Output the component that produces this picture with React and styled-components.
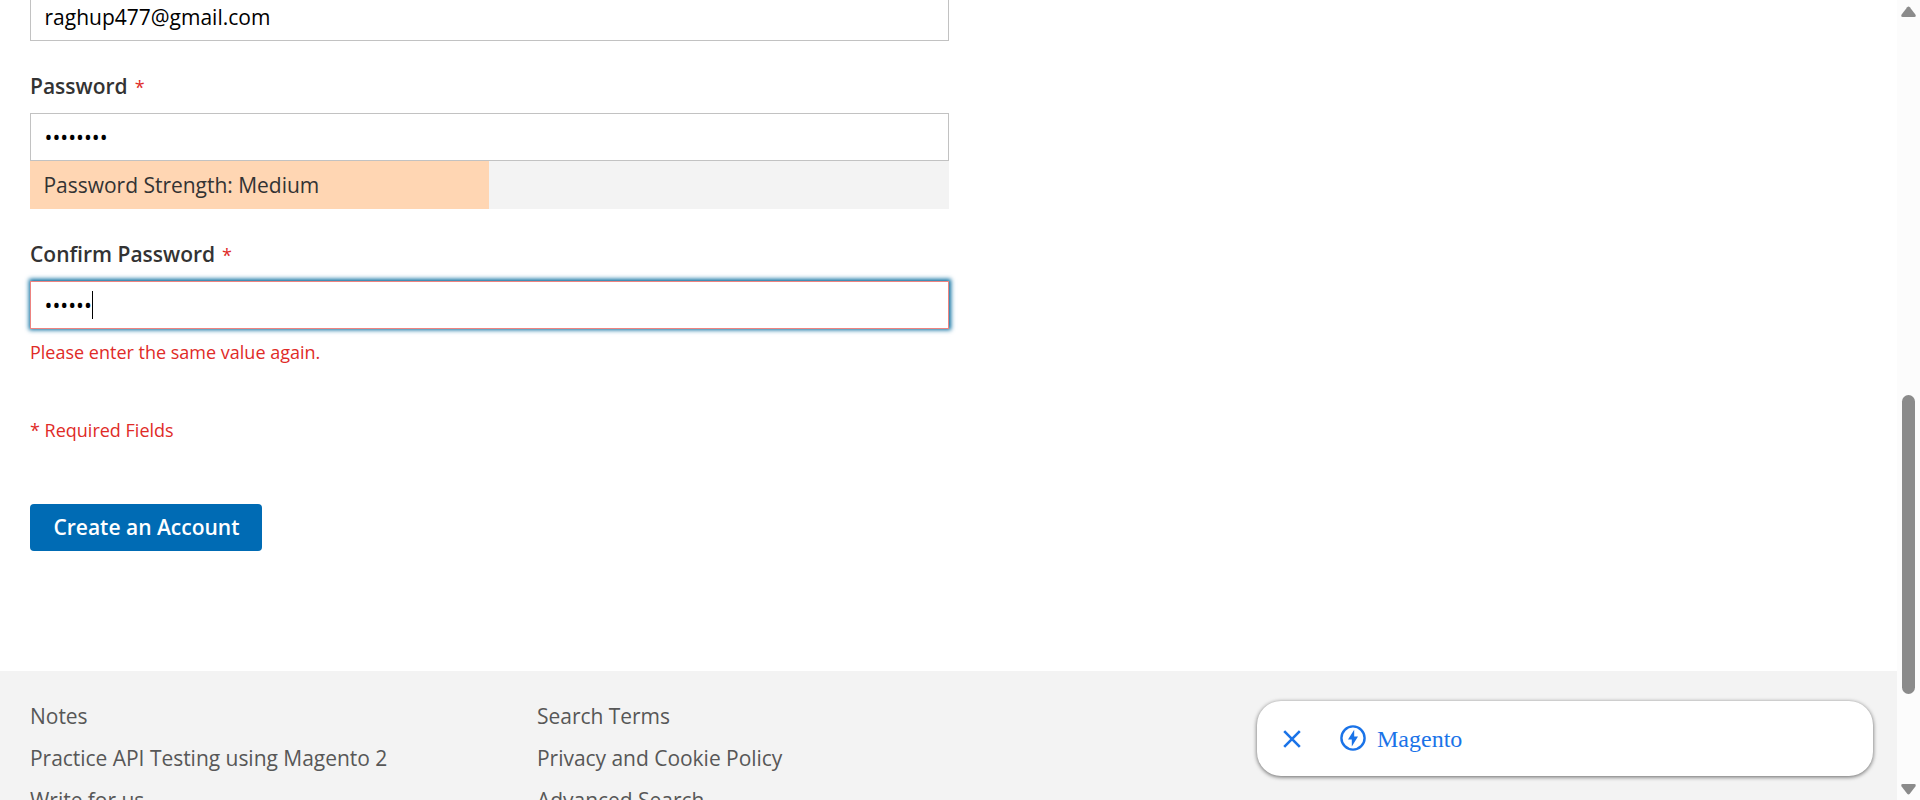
import React from "react";
import styled, { createGlobalStyle, css } from "styled-components";

const GlobalStyle = createGlobalStyle`
  *, *::before, *::after { box-sizing: border-box; }
  html, body { margin: 0; height: 100%; overflow: hidden; background: #fff; }
`;

const Window = styled.div`
  position: relative;
  display: flex;
  width: 1920px;
  height: 800px;
  overflow: hidden;
  background: #fff;
  color: #333;
  font: 400 21px/30px "Open Sans", sans-serif;
`;

const Page = styled.div`
  flex: 1;
  display: flex;
  flex-direction: column;
  overflow: hidden;
`;

const Form = styled.form`
  display: flex;
  flex-direction: column;
  align-items: flex-start;
  height: 671px;
  flex: none;
  padding-left: 30px;
`;

const Field = styled.div`
  width: 919px;
  margin-bottom: ${(p) => p.$gap || 0}px;
`;

const Label = styled.label`
  display: block;
  height: 30px;
  margin-bottom: 12px;
  font-weight: 600;
`;

const Required = styled.span`
  margin-left: 7px;
  color: #e02b27;
  font-weight: 400;
  font-size: 18px;
`;

const Control = styled.div`
  display: flex;
  align-items: center;
  height: 48px;
  padding: 0 13.5px;
  border: 1px solid #c2c2c2;
  background: #fff;
  color: #000;
  ${(p) =>
    p.$cut &&
    css`
      height: 41px;
      padding-bottom: 6px;
      border-top: 0;
    `}
  ${(p) =>
    p.$invalid &&
    css`
      border-color: #ed8380;
      box-shadow: 0 -0.5px 4.5px 1.5px #00699d;
    `}
`;

const Caret = styled.span`
  width: 1px;
  height: 28px;
  background: #000;
`;

const Meter = styled.div`
  height: 48px;
  background: #f3f3f3;
`;

const MeterFill = styled.div`
  width: 459px;
  height: 48px;
  padding-left: 13.5px;
  line-height: 48px;
  letter-spacing: -0.02px;
  background: #ffd6b3;
`;

const Note = styled.div`
  height: 26px;
  font-size: 18px;
  line-height: 26px;
  color: #e02b27;
`;

const FieldError = styled(Note)`
  margin-top: 10px;
`;

const Submit = styled.button`
  width: 232px;
  height: 47px;
  margin-top: 61px;
  padding: 0 0 0 1px;
  border: 0;
  border-radius: 4px;
  background: #006bb4;
  color: #fff;
  font: 600 21px/47px "Open Sans", sans-serif;
`;

const Footer = styled.footer`
  flex: 1;
  display: grid;
  grid-template-columns: 507px 507px;
  padding: 24px 0 0 30px;
  background: #f3f3f3;
  overflow: hidden;
`;

const LinkList = styled.ul`
  margin: 0;
  padding: 0;
  list-style: none;
`;

const LinkItem = styled.li`
  height: 42px;
  line-height: 42px;
  letter-spacing: -0.03px;
  color: #575757;
`;

const Scrollbar = styled.div`
  display: flex;
  flex-direction: column;
  align-items: center;
  justify-content: space-between;
  width: 23px;
  padding: 6px 0 5px;
  background: #fcfcfc;
`;

const Thumb = styled.div`
  width: 13px;
  height: 299px;
  margin-top: 377px;
  margin-bottom: auto;
  border-radius: 7px;
  background: #8b8b8b;
`;

const Arrow = styled.svg`
  display: block;
  flex: none;
  width: 15px;
  height: 12px;
  fill: #8b8b8b;
  transform: ${(p) => (p.$down ? "rotate(180deg)" : "none")};
`;

const AnchorAd = styled.div`
  position: absolute;
  left: 1257px;
  top: 701px;
  display: flex;
  align-items: center;
  width: 616px;
  height: 75px;
  padding-left: 26px;
  border-radius: 24px;
  background: #fff;
  box-shadow: 0 1px 4px rgba(0, 0, 0, 0.6);
  color: #1a73e8;
  font: 24px/30px "Liberation Serif", "Times New Roman", serif;
`;

const CloseIcon = styled.svg`
  width: 18px;
  height: 18px;
  margin-right: 39px;
`;

const BoltIcon = styled.svg`
  width: 26px;
  height: 26px;
  margin: 0 11px 2px 0;
`;

const ScrollArrow = ({ down }) => (
  <Arrow $down={down} viewBox="0 0 15 12">
    <path d="M6.2 1.2Q7.5-.4 8.8 1.2L14.4 8.6Q15.5 11 13.2 11H1.8Q-.5 11 .6 8.6Z" />
  </Arrow>
);

const columns = [
  ["Notes", "Practice API Testing using Magento 2", "Write for us"],
  ["Search Terms", "Privacy and Cookie Policy", "Advanced Search"],
];

export default function App() {
  return (
    <Window>
      <GlobalStyle />
      <Page>
        <Form>
          <Field $gap={30}>
            <Control $cut>raghup477@gmail.com</Control>
          </Field>
          <Field $gap={30}>
            <Label>
              Password<Required>*</Required>
            </Label>
            <Control>••••••••</Control>
            <Meter>
              <MeterFill>Password Strength: Medium</MeterFill>
            </Meter>
          </Field>
          <Field $gap={52}>
            <Label>
              Confirm Password<Required>*</Required>
            </Label>
            <Control $invalid>
              ••••••
              <Caret />
            </Control>
            <FieldError>Please enter the same value again.</FieldError>
          </Field>
          <Note>* Required Fields</Note>
          <Submit type="button">Create an Account</Submit>
        </Form>
        <Footer>
          {columns.map((items) => (
            <LinkList key={items[0]}>
              {items.map((t) => (
                <LinkItem key={t}>{t}</LinkItem>
              ))}
            </LinkList>
          ))}
        </Footer>
      </Page>
      <Scrollbar>
        <ScrollArrow />
        <Thumb />
        <ScrollArrow down />
      </Scrollbar>
      <AnchorAd>
        <CloseIcon viewBox="0 0 18 18">
          <path d="M1.2 1.2 16.8 16.8M16.8 1.2 1.2 16.8" stroke="#1a73e8" strokeWidth="2.6" />
        </CloseIcon>
        <BoltIcon viewBox="0 0 26 26">
          <circle cx="13" cy="13" r="11.6" fill="none" stroke="#1a73e8" strokeWidth="2.4" />
          <path d="M14.2 4.8V11.4H18L11.8 21.4V14.6H8Z" fill="#1a73e8" />
        </BoltIcon>
        Magento
      </AnchorAd>
    </Window>
  );
}
